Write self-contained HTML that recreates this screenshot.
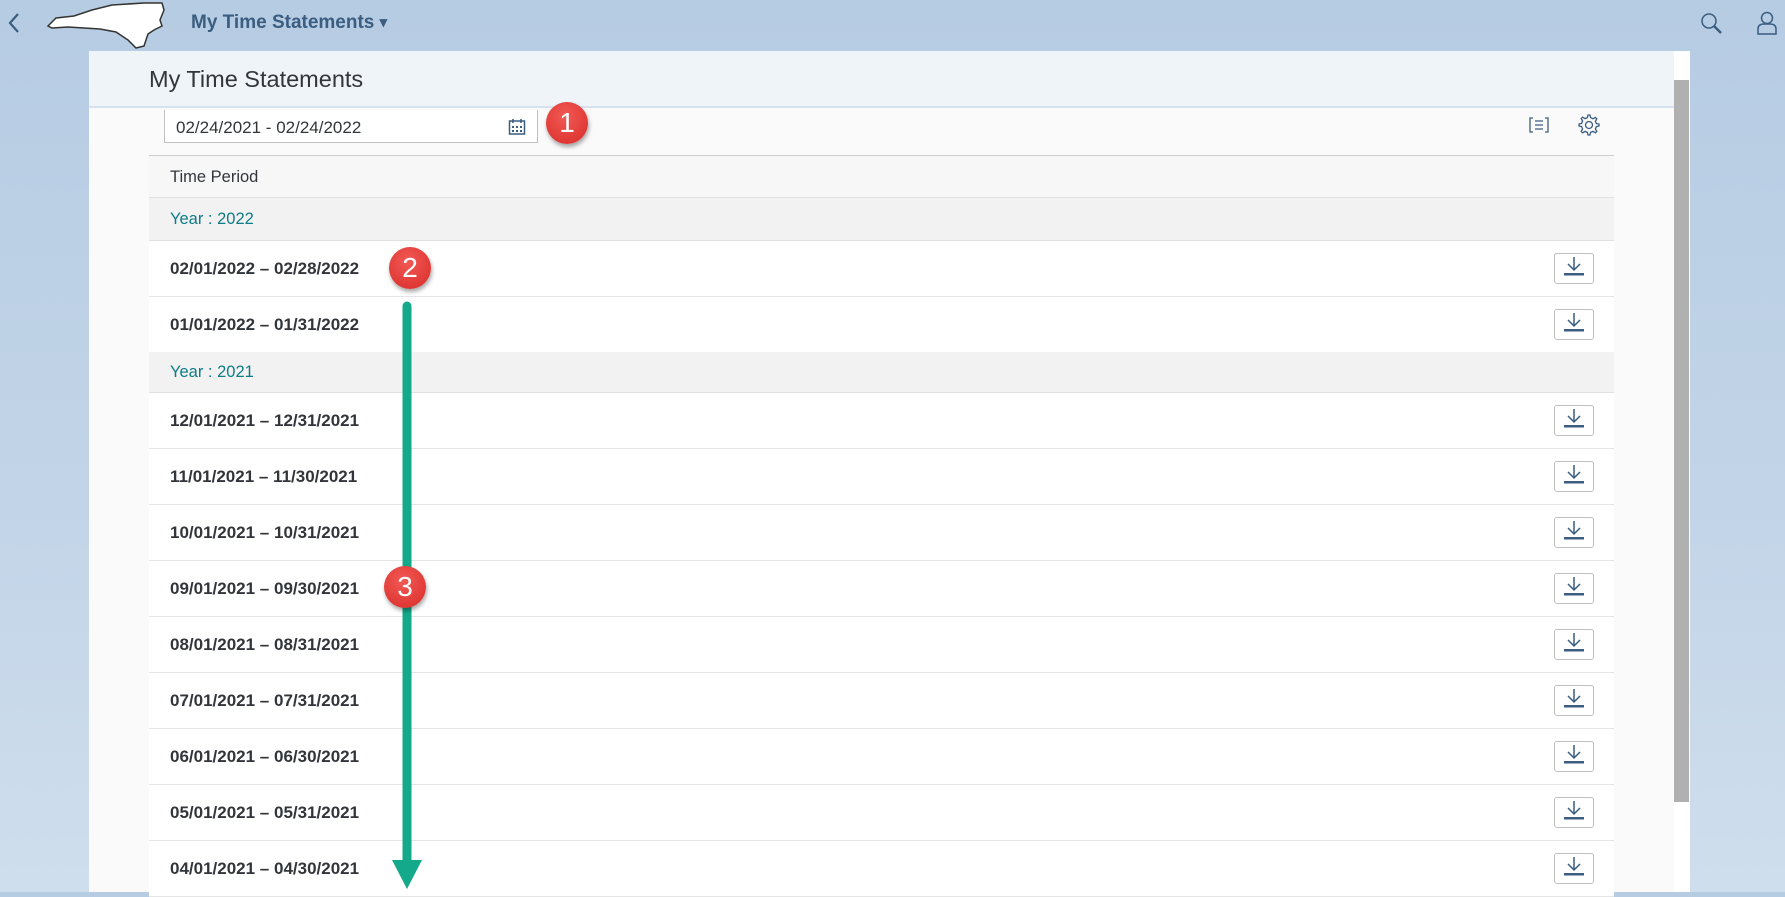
<!DOCTYPE html>
<html><head><meta charset="utf-8"><style>
*{box-sizing:border-box;margin:0;padding:0}
body{width:1785px;height:892px;overflow:hidden;position:relative;font-family:"Liberation Sans",sans-serif;background:linear-gradient(180deg,#b6cce3 0%,#c3d5e8 60%,#cfdeed 100%)}
.abs{position:absolute}
.panel{left:89px;top:51px;width:1585px;height:841px;background:#fafafa}
.phead{left:89px;top:51px;width:1585px;height:57px;background:#eff4f9;border-bottom:2px solid #d7e2ee}
.sb{left:1674px;top:51px;width:16px;height:841px;background:#fff}
.sbt{left:1674px;top:80px;width:15px;height:722px;background:#b0b0b0}
.row{position:absolute;left:149px;width:1465px;height:56px;background:#fff;border-bottom:1px solid #e5e5e5;font-weight:bold;font-size:17px;color:#32363a;padding-left:21px;line-height:55px}
.yr{position:absolute;left:149px;width:1465px;background:#f2f2f2;border-bottom:1px solid #e0e0e0;color:#0e7c86;font-size:16.5px;padding-left:21px}
.dl{position:absolute;right:20px;top:12px;width:40px;height:31px;border:1px solid #bfbfbf;border-radius:3px;background:#fff}
.badge{position:absolute;width:42px;height:42px;border-radius:50%;background:radial-gradient(circle at 45% 35%,#f25a55,#d82a28);color:#fff;font-size:28px;text-align:center;line-height:42px;box-shadow:1px 3px 4px rgba(0,0,0,.35)}
</style></head><body>
<svg class="abs" style="left:6px;top:12px" width="16" height="22"><path d="M12 2 L4 11 L12 20" stroke="#3a5d80" stroke-width="2.2" fill="none"/></svg>
<svg class="abs" style="left:44px;top:0px" width="126" height="50"><path d="M4 26 L12 18 L30 16 L48 10 L68 5 L100 3 L118 3 L120 10 L116 20 L118 26 L110 30 L104 34 L100 46 L92 48 L84 40 L72 32 L56 29 L40 28 L24 27 L8 28 Z" fill="#fff" stroke="#333" stroke-width="1.5"/></svg>
<div class="abs" style="left:191px;top:12px;font-size:19px;font-weight:bold;color:#3a5d80">My Time Statements <span style="font-size:15px;position:relative;top:-1px">▾</span></div>
<svg class="abs" style="left:1700px;top:12px" width="24" height="24"><circle cx="9" cy="9" r="7" stroke="#3a5d80" stroke-width="1.5" fill="none"/><path d="M14 14 L21 21" stroke="#3a5d80" stroke-width="2.5"/></svg>
<svg class="abs" style="left:1756px;top:11px" width="22" height="24"><circle cx="11" cy="7" r="5.5" stroke="#3a5d80" stroke-width="1.5" fill="none"/><path d="M2 23 L2 18 Q2 13 8 13 L14 13 Q20 13 20 18 L20 23 Z" stroke="#3a5d80" stroke-width="1.5" fill="none"/></svg>
<div class="abs panel"></div>
<div class="abs phead"></div>
<div class="abs" style="left:149px;top:66px;font-size:23.5px;color:#32363a">My Time Statements</div>
<div class="abs sb"></div><div class="abs sbt"></div>
<div class="abs" style="left:164px;top:110px;width:374px;height:33px;background:#fff;border:1px solid #c0c0c0;border-top:none;font-size:17px;color:#32363a;padding:8px 0 0 11px">02/24/2021 - 02/24/2022</div>
<svg class="abs" style="left:508px;top:118px" width="18" height="18"><rect x="1.5" y="3" width="15" height="13" fill="none" stroke="#3a5d80" stroke-width="1.5"/><path d="M5 1v4M13 1v4" stroke="#3a5d80" stroke-width="1.5"/><g fill="#3a5d80"><rect x="4" y="8" width="2" height="2"/><rect x="8" y="8" width="2" height="2"/><rect x="12" y="8" width="2" height="2"/><rect x="4" y="12" width="2" height="2"/><rect x="8" y="12" width="2" height="2"/><rect x="12" y="12" width="2" height="2"/></g></svg>
<svg class="abs" style="left:1528px;top:116px" width="22" height="18"><path d="M5 2H2V16H5M17 2H20V16H17M7 5H15M7 9H15M7 13H15" stroke="#3a5d80" stroke-width="1.3" fill="none"/></svg>
<svg class="abs" style="left:1578px;top:114px" width="22" height="22"><path d="M11 2 L13 2 L13.6 4.6 L16 5.8 L18.4 4.4 L19.8 5.8 L18.4 8.2 L19.4 10.6 L22 11 L22 13 L19.4 13.6 L18.4 16 L19.8 18.4 L18.4 19.8 L16 18.4 L13.6 19.4 L13 22 L11 22 L10.4 19.4 L8 18.4 L5.6 19.8 L4.2 18.4 L5.6 16 L4.6 13.6 L2 13 L2 11 L4.6 10.4 L5.6 8 L4.2 5.6 L5.6 4.2 L8 5.6 L10.4 4.6 Z" transform="translate(-1,-1)" stroke="#3a5d80" stroke-width="1.3" fill="none"/><circle cx="11" cy="11" r="3.5" stroke="#3a5d80" stroke-width="1.3" fill="none"/></svg>
<div class="abs" style="left:149px;top:155px;width:1465px;height:43px;background:#f7f7f7;border-top:1px solid #ccc;border-bottom:1px solid #e0e0e0;font-size:16.5px;color:#32363a;padding:12px 0 0 21px">Time Period</div>
<div class="yr" style="top:198px;height:43px;line-height:43px">Year : 2022</div>
<div class="row" style="top:241px">02/01/2022 – 02/28/2022<div class="dl"></div></div>
<div class="row" style="top:297px">01/01/2022 – 01/31/2022<div class="dl"></div></div>
<div class="yr" style="top:352px;height:41px;line-height:41px">Year : 2021</div>
<div class="row" style="top:393px">12/01/2021 – 12/31/2021<div class="dl"></div></div>
<div class="row" style="top:449px">11/01/2021 – 11/30/2021<div class="dl"></div></div>
<div class="row" style="top:505px">10/01/2021 – 10/31/2021<div class="dl"></div></div>
<div class="row" style="top:561px">09/01/2021 – 09/30/2021<div class="dl"></div></div>
<div class="row" style="top:617px">08/01/2021 – 08/31/2021<div class="dl"></div></div>
<div class="row" style="top:673px">07/01/2021 – 07/31/2021<div class="dl"></div></div>
<div class="row" style="top:729px">06/01/2021 – 06/30/2021<div class="dl"></div></div>
<div class="row" style="top:785px">05/01/2021 – 05/31/2021<div class="dl"></div></div>
<div class="row" style="top:841px">04/01/2021 – 04/30/2021<div class="dl"></div></div>
<svg class="abs" style="left:0;top:0;pointer-events:none" width="1785" height="892">
<defs><g id="d"><path d="M0 0V12M-6 7L0 13L6 7" stroke="#3a5d80" stroke-width="1.5" fill="none"/><rect x="-10" y="16" width="20" height="2.5" fill="#3a5d80"/></g></defs>
<use href="#d" x="1574" y="257"/><use href="#d" x="1574" y="313"/><use href="#d" x="1574" y="409"/><use href="#d" x="1574" y="465"/><use href="#d" x="1574" y="521"/><use href="#d" x="1574" y="577"/><use href="#d" x="1574" y="633"/><use href="#d" x="1574" y="689"/><use href="#d" x="1574" y="745"/><use href="#d" x="1574" y="801"/><use href="#d" x="1574" y="857"/>
<line x1="407" y1="306" x2="407" y2="864" stroke="#14a98a" stroke-width="9" stroke-linecap="round"/>
<path d="M392 860 L422 860 L407 889 Z" fill="#14a98a"/>
</svg>
<div class="badge" style="left:546px;top:102px">1</div>
<div class="badge" style="left:389px;top:247px">2</div>
<div class="badge" style="left:384px;top:566px">3</div>
</body></html>
